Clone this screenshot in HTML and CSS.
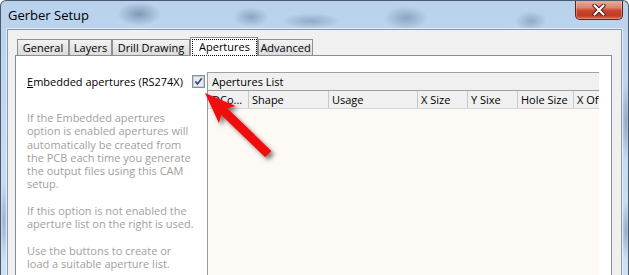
FILE: index.html
```html
<!DOCTYPE html>
<html>
    <head>
        <title>Gerber Setup</title>
        <link rel="stylesheet" href="styles.css">
    </head>
    <body>
        <div class="window">
            <div class="titlebar">
                <span class="title">Gerber Setup</span>
                <div class="close">
                    <svg width="14" height="12" viewBox="0 0 14 12">
                        <path d="M2.5 1.5 L11.5 10.5 M11.5 1.5 L2.5 10.5" stroke="#4a1d14" stroke-width="4.2" stroke-linecap="round" />
                        <path d="M2.5 1.5 L11.5 10.5 M11.5 1.5 L2.5 10.5" stroke="#ffffff" stroke-width="2.2" stroke-linecap="round" />
                    </svg>
                </div>
            </div>
            <div class="client">
                <div class="tabs">
                    <div class="tab tab-general">General</div>
                    <div class="tab tab-layers">Layers</div>
                    <div class="tab tab-drill">Drill Drawing</div>
                    <div class="tab tab-apertures active"><span class="focus">Apertures</span></div>
                    <div class="tab tab-advanced">Advanced</div>
                </div>
                <div class="page">
                    <div class="options">
                        <div class="embed">
                            <span class="label"><u>E</u>mbedded apertures (RS274X)</span>
                            <span class="check">
                                <svg width="13" height="13" viewBox="0 0 13 13">
                                    <rect x="0.5" y="0.5" width="12" height="12" fill="#f4f4f4" stroke="#8e8f8f" />
                                    <rect x="1.5" y="1.5" width="10" height="10" fill="#e8ebef" stroke="#c6ccd3" />
                                    <path d="M3.3 6.4 L5.5 8.9 L9.8 3.2" fill="none" stroke="#344a8c" stroke-width="1.7" />
                                </svg>
                            </span>
                        </div>
                        <p class="hint">If the Embedded apertures<br>option is enabled apertures will<br>automatically be created from<br>the PCB each time you generate<br>the output files using this CAM<br>setup.</p>
                        <p class="hint">If this option is not enabled the<br>aperture list on the right is used.</p>
                        <p class="hint">Use the buttons to create or<br>load a suitable aperture list.</p>
                    </div>
                    <div class="list">
                        <div class="list-title">Apertures List</div>
                        <div class="cols">
                            <div class="col col-dcode">DCo...</div>
                            <div class="col col-shape">Shape</div>
                            <div class="col col-usage">Usage</div>
                            <div class="col col-xsize">X Size</div>
                            <div class="col col-ysize">Y Sixe</div>
                            <div class="col col-hole">Hole Size</div>
                            <div class="col col-xoff">X Offset</div>
                        </div>
                        <div class="rows"></div>
                    </div>
                </div>
            </div>
        </div>
        <svg class="arrow" width="629" height="275" viewBox="0 0 629 275">
            <defs>
                <filter id="shadow" x="-30%" y="-30%" width="160%" height="160%">
                    <feDropShadow dx="3" dy="3" stdDeviation="2" flood-color="#000" flood-opacity="0.5" />
                </filter>
            </defs>
            <g filter="url(#shadow)">
                <polygon transform="translate(205 93) rotate(44)" points="0,0 31,-12 27,-4.5 88,-4.5 88,4.5 27,4.5 31,12" fill="#f00f0f" />
            </g>
        </svg>
    </body>
</html>
```

FILE: styles.css
```css
body {
    position: relative;
    margin: 0;
    width: 629px;
    height: 275px;
    overflow: hidden;
    font-family: 'Open Sans', sans-serif;
    font-size: 11px;
    color: #000;
}

.window {
    display: flex;
    flex-direction: column;
    box-sizing: border-box;
    width: 629px;
    height: 275px;
    border: 1px solid #4a5a6e;
    border-bottom: 0;
    border-radius: 6px 6px 0 0;
    overflow: hidden;
    background:
        radial-gradient(ellipse 22px 12px at 138px 13px, rgba(70, 95, 125, 0.5), transparent),
        radial-gradient(ellipse 18px 10px at 250px 16px, rgba(70, 95, 125, 0.4), transparent),
        radial-gradient(ellipse 30px 8px at 310px 20px, rgba(70, 95, 125, 0.35), transparent),
        radial-gradient(ellipse 22px 12px at 405px 17px, rgba(70, 95, 125, 0.4), transparent),
        radial-gradient(ellipse 16px 10px at 530px 20px, rgba(70, 95, 125, 0.35), transparent),
        radial-gradient(ellipse 5px 40px at 625px 120px, rgba(70, 95, 125, 0.4), transparent),
        radial-gradient(ellipse 5px 30px at 625px 230px, rgba(70, 95, 125, 0.4), transparent),
        radial-gradient(ellipse 4px 40px at 3px 220px, rgba(70, 95, 125, 0.35), transparent),
        linear-gradient(#b9d2ec, #cfe2f5);
}

.titlebar {
    display: flex;
    justify-content: space-between;
    align-items: center;
    height: 28px;
    flex-shrink: 0;
}

.title {
    padding-left: 7px;
    font-size: 13px;
    color: #000;
}

.close {
    display: flex;
    align-items: center;
    justify-content: center;
    align-self: flex-start;
    box-sizing: border-box;
    width: 48px;
    height: 20px;
    margin: -1px 5px 0 0;
    border: 1px solid #5b2419;
    border-top: 0;
    border-radius: 0 0 5px 5px;
    background: linear-gradient(#e9b1a2, #dc8470 40%, #c9482f 55%, #c13a23 80%, #d8654b);
    box-shadow: inset 0 0 0 1px rgba(255, 220, 210, 0.35);
}

.close svg {
    display: block;
}

.client {
    display: flex;
    flex-direction: column;
    flex: 1;
    margin: 0 6px;
    padding: 7px 9px 0 7px;
    border: 1px solid #8a99a9;
    border-bottom: 0;
    background: #f0f0f0;
    box-shadow: 0 0 0 1px rgba(255, 255, 255, 0.55);
}

.tabs {
    display: flex;
    align-items: flex-end;
    height: 18px;
    padding-left: 2px;
}

.tab {
    box-sizing: border-box;
    height: 16px;
    border: 1px solid #8d8f93;
    border-bottom: 0;
    background: linear-gradient(#f3f3f3, #e6e6e6 50%, #dcdcdc);
    text-align: center;
    line-height: 15px;
    white-space: nowrap;
}

.tab-general {
    width: 52px;
}

.tab-layers {
    width: 43px;
}

.tab-drill {
    width: 78px;
}

.tab-apertures {
    width: 68px;
}

.tab-advanced {
    width: 55px;
}

.tab.active {
    position: relative;
    z-index: 1;
    height: 19px;
    margin-bottom: -1px;
    padding: 1px 0 0 1px;
    background: #fff;
}

.focus {
    display: block;
    height: 15px;
    border: 1px dotted #000;
    line-height: 14px;
}

.page {
    display: flex;
    flex: 1;
    padding: 16px 0 0 11px;
    border: 1px solid #898c95;
    border-bottom: 0;
    background: #fff;
}

.options {
    width: 178px;
    flex-shrink: 0;
    padding-right: 2px;
}

.embed {
    display: flex;
    justify-content: space-between;
    align-items: center;
    height: 18px;
}

.check svg {
    display: block;
}

.hint {
    margin: 0 0 13.3px;
    color: #a39e9d;
    line-height: 13.3px;
    white-space: nowrap;
}

.embed + .hint {
    margin-top: 21px;
}

.list {
    display: flex;
    flex-direction: column;
    width: 391px;
    border-top: 1px solid #a0a0a0;
    border-left: 1px solid #9a9a9a;
    overflow: hidden;
}

.list-title {
    height: 17px;
    padding-left: 4px;
    border-bottom: 1px solid #a0a0a0;
    background: #f0f0f0;
    line-height: 17px;
}

.cols {
    display: flex;
    height: 17px;
    border-bottom: 1px solid #d5d5d5;
    background: #f0f0f0;
    white-space: nowrap;
}

.col {
    box-sizing: border-box;
    flex-shrink: 0;
    padding-left: 3px;
    border-right: 1px solid #c8c8c8;
    line-height: 17px;
    overflow: hidden;
}

.col-dcode {
    width: 41px;
    padding-left: 4px;
}

.col-shape {
    width: 80px;
}

.col-usage {
    width: 89px;
}

.col-xsize,
.col-ysize {
    width: 50px;
}

.col-hole {
    width: 56px;
}

.col-xoff {
    width: 60px;
}

.rows {
    flex: 1;
    background: #fdfaf5;
}

.arrow {
    position: absolute;
    top: 0;
    left: 0;
    pointer-events: none;
}
```
